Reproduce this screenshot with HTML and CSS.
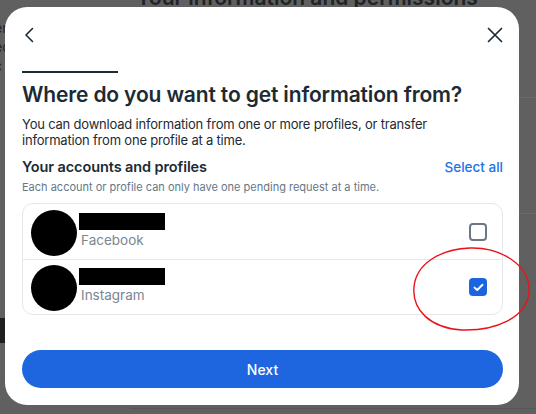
FILE: index.html
```html
<!DOCTYPE html>
<html>
<head>
<meta charset="utf-8">
<link rel="stylesheet" href="styles.css">
</head>
<body>
<div class="page">
  <div class="page-title">Your information and permissions</div>
  <div class="page-side">
    <span>er</span><span>ec</span><span>c</span>
  </div>
  <div class="page-dark"></div>
  <div class="page-line l1"></div>
  <div class="page-line l2"></div>
  <div class="page-line l3"></div>
</div>

<div class="modal">
  <div class="modal-head">
    <svg class="icon" width="16" height="16" viewBox="0 0 16 16"><path d="M10.5 1.5 L4 8 L10.5 14.5" fill="none" stroke="#1c2b33" stroke-width="1.6" stroke-linecap="round" stroke-linejoin="round"/></svg>
    <svg class="icon" width="16" height="16" viewBox="0 0 16 16"><path d="M1.5 1.5 L14.5 14.5 M14.5 1.5 L1.5 14.5" fill="none" stroke="#1c2b33" stroke-width="1.7" stroke-linecap="round"/></svg>
  </div>
  <div class="progress"></div>
  <h1 class="title">Where do you want to get information from?</h1>
  <p class="desc">You can download information from one or more profiles, or transfer information from one profile at a time.</p>
  <div class="section-head">
    <span class="section-title">Your accounts and profiles</span>
    <span class="select-all">Select all</span>
  </div>
  <p class="note">Each account or profile can only have one pending request at a time.</p>

  <div class="list">
    <div class="row">
      <div class="avatar"></div>
      <div class="info">
        <div class="redact"></div>
        <div class="platform">Facebook</div>
      </div>
      <div class="check"></div>
    </div>
    <div class="row">
      <div class="avatar"></div>
      <div class="info">
        <div class="redact"></div>
        <div class="platform">Instagram</div>
      </div>
      <div class="check checked">
        <svg width="11" height="9" viewBox="0 0 11 9"><path d="M1.5 4.6 L4.2 7 L9.5 1.8" fill="none" stroke="#fff" stroke-width="1.9" stroke-linecap="round" stroke-linejoin="round"/></svg>
      </div>
    </div>
  </div>

  <button class="next">Next</button>
</div>

<svg class="annotation" width="536" height="414" viewBox="0 0 536 414"><path d="M470 248 C 500 247, 531 265, 529 292 C 527 318, 495 331, 462 330 C 430 328, 412 310, 414 287 C 416 264, 440 249, 470 248 Z" fill="none" stroke="#e8141a" stroke-width="1.4"/></svg>
</body>
</html>
```

FILE: styles.css
```css
* { box-sizing: border-box; }
html, body { margin: 0; padding: 0; }
body {
  width: 536px;
  height: 414px;
  overflow: hidden;
  background: #606060;
  font-family: Inter, "Noto Sans", sans-serif;
  position: relative;
}
.page { position: relative; height: 414px; }
.page-title {
  position: absolute;
  left: 136px;
  top: -16px;
  font-size: 21px;
  line-height: 28px;
  font-weight: 600;
  color: #1f2325;
  white-space: nowrap;
}
.page-side {
  position: absolute;
  left: -6px;
  top: 18px;
  display: flex;
  flex-direction: column;
  font-size: 14px;
  line-height: 19px;
  color: #232629;
}
.page-dark {
  position: absolute;
  left: 0;
  top: 318px;
  width: 10px;
  height: 25px;
  background: #1f1f1f;
}
.page-line {
  position: absolute;
  height: 1px;
  background: #6a6a6a;
}
.l1 { left: 500px; right: 0; top: 97px; }
.l2 { left: 500px; right: 0; top: 213px; }
.l3 { left: 130px; right: 0; top: 408px; background: #575757; }
.modal {
  position: absolute;
  left: 5px;
  top: 7px;
  width: 514px;
  height: 398px;
  background: #fff;
  border-radius: 22px;
  padding: 0 16px 0 17px;
  display: flex;
  flex-direction: column;
}
.modal-head {
  display: flex;
  justify-content: space-between;
  align-items: center;
  padding: 19px 0 0 0;
  height: 37px;
}
.progress {
  margin-top: 27px;
  width: 96px;
  height: 2px;
  background: #1c2b33;
}
.title {
  margin: 9px 0 0;
  font-size: 21px;
  line-height: 26px;
  font-weight: 600;
  color: #1c2b33;
  letter-spacing: -0.15px;
}
.desc {
  margin: 8px 0 0;
  font-size: 13px;
  line-height: 16px;
  color: #1c2b33;
  letter-spacing: -0.2px;
  width: 430px;
}
.section-head {
  margin-top: 9px;
  display: flex;
  justify-content: space-between;
  align-items: baseline;
}
.section-title {
  font-size: 14.5px;
  font-weight: 600;
  color: #1c2b33;
  line-height: 20px;
  letter-spacing: -0.1px;
}
.select-all {
  font-size: 13.5px;
  color: #1a73e8;
  font-weight: 500;
}
.note {
  margin: 2px 0 0;
  font-size: 11px;
  line-height: 16px;
  color: #667786;
}
.list {
  margin-top: 8px;
  border: 1px solid #e4e8ec;
  border-radius: 11px;
  display: flex;
  flex-direction: column;
}
.row {
  display: flex;
  align-items: flex-start;
  height: 55px;
  padding: 6px 15px 0 8px;
}
.row + .row { border-top: 1px solid #e4e8ec; height: 55px; padding-top: 5px; }
.avatar {
  width: 46px;
  height: 46px;
  border-radius: 50%;
  background: #000;
  flex: none;
}
.info {
  flex: 1;
  display: flex;
  flex-direction: column;
  padding: 3px 0 0 2px;
}
.redact {
  width: 86px;
  height: 17px;
  background: #000;
}
.platform {
  margin: 2px 0 0 2px;
  font-size: 13.5px;
  line-height: 17px;
  color: #7a8690;
}
.check {
  align-self: center;
  margin-top: -6px;
  width: 18px;
  height: 18px;
  border: 2px solid #6b7784;
  border-radius: 4px;
  display: flex;
  align-items: center;
  justify-content: center;
}
.row + .row .check { margin-top: -5px; }
.check.checked {
  background: #1b66e0;
  border-color: #1b66e0;
}
.next {
  margin-top: 35px;
  height: 38px;
  border: none;
  border-radius: 20px;
  background: #1d66e0;
  color: #fff;
  font-family: inherit;
  font-size: 14px;
  font-weight: 500;
}
.annotation {
  position: absolute;
  left: 0;
  top: 0;
  pointer-events: none;
}
```
